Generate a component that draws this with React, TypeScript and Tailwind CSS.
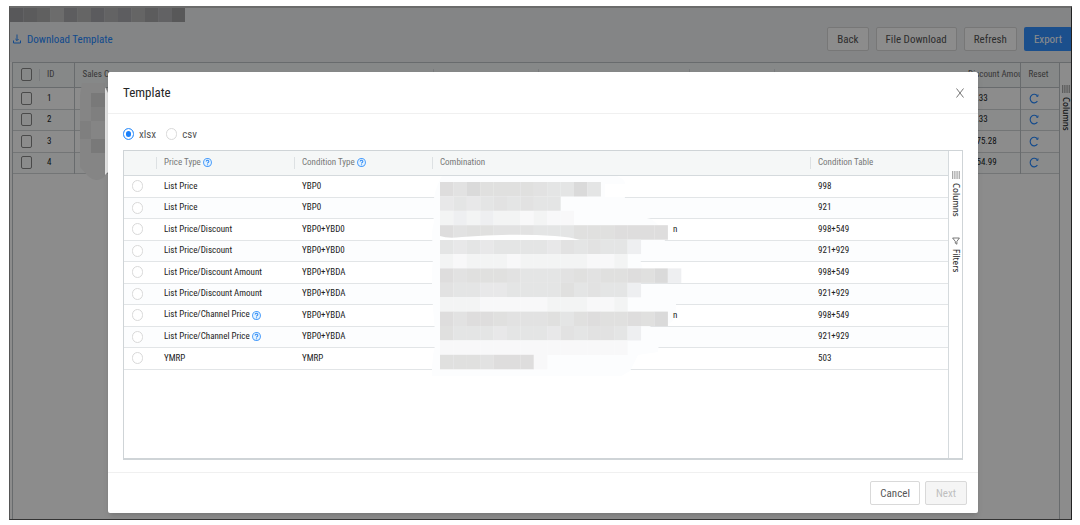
import { useState } from 'react';

const priceRows = [
    { id: 1, type: 'List Price', condition: 'YBP0', table: '998' },
    { id: 2, type: 'List Price', condition: 'YBP0', table: '921' },
    { id: 3, type: 'List Price/Discount', condition: 'YBP0+YBD0', rest: 'n', table: '998+549' },
    { id: 4, type: 'List Price/Discount', condition: 'YBP0+YBD0', table: '921+929' },
    { id: 5, type: 'List Price/Discount Amount', condition: 'YBP0+YBDA', table: '998+549' },
    { id: 6, type: 'List Price/Discount Amount', condition: 'YBP0+YBDA', table: '921+929' },
    { id: 7, type: 'List Price/Channel Price', help: true, condition: 'YBP0+YBDA', rest: 'n', table: '998+549' },
    { id: 8, type: 'List Price/Channel Price', help: true, condition: 'YBP0+YBDA', table: '921+929' },
    { id: 9, type: 'YMRP', condition: 'YMRP', table: '503' },
];

const orders = [
    { id: 1, amount: '0.33' },
    { id: 2, amount: '0.33' },
    { id: 3, amount: '275.28' },
    { id: 4, amount: '254.99' },
];

// one string per strip, one digit per block: 0 is the darkest grey, 9 nearly white
const strips = [
    '130222234404',
    '545434344',
    '7676778788',
    '13223334442221111',
    '454544445343446',
    '78777877777887',
    '132223444323221206',
    '344554444243446',
    '77788888777887',
    '13112333242122120',
    '244454445343346',
    '88888888888888',
    '22231118',
];
const greys = ['#dadada', '#dedddd', '#e0e0df', '#e2e2e2', '#e4e5e5', '#e8e8e9', '#eeeff1', '#f3f4f4', '#f8f8f9', '#fcfcfc'];

const HelpMark = () => (
    <svg viewBox="0 0 16 16" className="inline-block h-[9px] w-[9px] align-middle" aria-hidden="true">
        <circle cx="8" cy="8" r="7" fill="#e6f4ff" stroke="#4a9dfb" strokeWidth="1.8" />
        <path d="M5.6 6.4c0-3.2 4.8-3.2 4.8-.2 0 1.7-2.4 1.8-2.4 3.4" fill="none" stroke="#2f8af5" strokeWidth="1.8" />
        <circle cx="8" cy="12" r="1.1" fill="#2f8af5" />
    </svg>
);

const ColumnsMark = () => (
    <svg viewBox="0 0 8 8" className="h-2 w-2" aria-hidden="true">
        <path d="M0 0h8v8H0z" fill="#e6e6e6" />
        <path d="M.5 0v8M2.8 0v8M5.1 0v8M7.4 0v8" stroke="#999" strokeWidth=".8" />
    </svg>
);

const FilterMark = () => (
    <svg viewBox="0 0 8 8" className="h-2 w-2" aria-hidden="true">
        <path d="M.6 1h6.8L4.9 4.4v2.8L3.3 6.2V4.4z" fill="none" stroke="#555" strokeWidth=".8" />
    </svg>
);

const DownloadMark = () => (
    <svg viewBox="0 0 10 10" className="h-[10px] w-[10px]" fill="none" stroke="currentColor" aria-hidden="true">
        <path d="M1.5 6.5V9h7V6.5M5 .5v6M3.4 5l1.6 1.6L6.6 5" />
    </svg>
);

const ReloadMark = () => (
    <svg viewBox="0 0 10 11" className="h-[11px] w-[10px]" fill="none" stroke="currentColor" strokeWidth="1.1" aria-hidden="true">
        <path d="M8.4 8.1A4 4.3 0 1 1 8.4 3" />
        <path d="M9 1.4v2H7.4" strokeWidth=".9" />
    </svg>
);

const Mosaic = () => (
    <svg width="260" height="200" viewBox="0 0 260 200" className="absolute left-0 top-0 z-10 max-w-none" aria-hidden="true">
        <path d="M10 0h175q8 3 8 8h-20v13h20q-2 12-12 13l38 9q10 6 12 16l2 6-3 15-22 3 4 14-8 14 30 2 10 6v15q-1 12-8 14h-22l14 8-2 20-20 3-8 16-12 7-60 3-30 2 6 13H2q-5-30 2-55Q-3 100 2 78q-4-20 0-32Q-2 20 10 0" fill="#fcfdfe" />
        {strips.map((strip, row) =>
            strip.split('').map((shade, col) => (
                <rect key={`${row}-${col}`} x={8 + col * 13.4} y={6 + row * 14.4} width="13.5" height="14.5" fill={greys[Number(shade)]} />
            ))
        )}
        <path d="M8 60q8 3 22 1 50-4 93-1 16 1 25 4H8z" fill="#fff" />
    </svg>
);

const heading =
    'relative p-0 pl-2 text-left font-normal before:absolute before:left-0 before:top-1/4 before:h-1/2 before:w-px before:bg-[#dde1e3]';
const button = 'h-6 shrink-0 rounded-[2px] border border-[#d9d9d9] bg-white px-[9px] text-[11px] text-[#555]';
const checkbox = 'ml-2 block h-[13px] w-[11px] appearance-none rounded-[2px] border border-[#888]';
const radio =
    'h-3 w-[11px] shrink-0 appearance-none rounded-full border border-[#d9d9d9] bg-white checked:border-[#4a9dfb] checked:bg-[#1b80fa] checked:shadow-[inset_0_0_0_2px_#fff]';

const App = () => {
    const [format, setFormat] = useState('xlsx');
    const [selected, setSelected] = useState(0);

    return (
        <div className="flex min-h-screen bg-white pb-[5px] pl-[9px] pr-2 pt-[6px] font-['Roboto_Condensed',Roboto,sans-serif] leading-none">
            <div className="relative flex min-w-0 flex-1 flex-col overflow-hidden border border-t-2 border-b-[#333] border-l-[#555] border-r-[#222] border-t-[#6b6b6b]">
                <header className="bg-[#f0f2f5]">
                    <svg width="175" height="14" viewBox="0 0 175 14" className="block" aria-hidden="true">
                        {['#a0a0a5', '#a6a6a8', '#b0b0b0', '#c5c5c5', '#aaaaad', '#b8b8b8', '#a7a7ac', '#b4b4b6', '#aaaab0', '#b9b9b9', '#a8a8aa', '#b2b2b6', '#a0a0a2'].map((fill, i) => (
                            <rect key={i} x={i * 13.5} y="0" width="13.6" height="14" fill={fill} />
                        ))}
                    </svg>
                    <div className="-mr-px flex h-10 items-start justify-between pl-[2px] pt-[5px]">
                        <a href="#download" className="flex h-6 items-center gap-[5px] text-[11px] text-[#2488ff]">
                            <DownloadMark />
                            Download Template
                        </a>
                        <div className="flex gap-[7px]">
                            <button className={button}>Back</button>
                            <button className={button}>File Download</button>
                            <button className={button}>Refresh</button>
                            <button className="h-6 rounded-[2px] bg-[#3290ff] px-[10px] text-[11px] text-white">Export</button>
                        </div>
                    </div>
                </header>

                <main className="ml-[2px] flex flex-1 border-l border-t border-[#bdc3c7] bg-white">
                    <div className="min-w-0 flex-1">
                        <table className="w-full table-fixed border-collapse text-[9px] text-[#181d1f]">
                            <colgroup>
                                <col className="w-[26px]" />
                                <col className="w-[35px]" />
                                <col />
                                <col className="w-[105px]" />
                                <col className="w-[151px]" />
                                <col className="w-[85px]" />
                                <col className="w-[180px]" />
                                <col className="w-[66px]" />
                                <col className="w-[39px]" />
                            </colgroup>
                            <thead>
                                <tr className="h-6 border-b border-[#bdc3c7] bg-[#f5f7f7] text-[#666]">
                                    <th className="p-0">
                                        <input type="checkbox" aria-label="Select all" className={checkbox} />
                                    </th>
                                    <th className={`${heading} border-r border-[#bdc3c7]`}>ID</th>
                                    <th className="p-0 pl-2 text-left font-normal">Sales Org</th>
                                    <th className={heading}></th>
                                    <th className={heading}></th>
                                    <th className={heading}></th>
                                    <th className={heading}></th>
                                    <th className="overflow-hidden whitespace-nowrap border-r border-[#bdc3c7] p-0 pl-[14px] text-left font-normal">Discount Amount</th>
                                    <th className="p-0 pl-2 text-left font-normal">Reset</th>
                                </tr>
                            </thead>
                            <tbody>
                                {orders.map((order) => (
                                    <tr key={order.id} className="border-b border-[#d2d6d8] odd:h-[22px] even:h-[21px] even:bg-[#fcfdfe]">
                                        <td className="p-0">
                                            <input type="checkbox" aria-label={`Select row ${order.id}`} className={checkbox} />
                                        </td>
                                        <td className="border-r border-[#bdc3c7] p-0 pl-2">{order.id}</td>
                                        <td colSpan={5}></td>
                                        <td className="border-r border-[#bdc3c7] p-0 pl-[18px]">{order.amount}</td>
                                        <td className="p-0 pl-2">
                                            <button aria-label="Reset row" className="block text-[#2488ff]">
                                                <ReloadMark />
                                            </button>
                                        </td>
                                    </tr>
                                ))}
                            </tbody>
                        </table>
                    </div>
                    <aside className="w-3 border-l border-[#bdc3c7] pl-[2px]">
                        <button className="mt-[22px] flex flex-col items-center gap-1 font-['Noto_Sans'] text-[8px] font-medium text-[#181d1f]">
                            <ColumnsMark />
                            <span className="[writing-mode:vertical-rl]">Columns</span>
                        </button>
                    </aside>
                </main>

                <div className="absolute inset-0 flex bg-black/45 pb-[6px] pl-[98px] pr-[93px] pt-16">
                    {/* hidden values of the first column */}
                    <svg width="34" height="100" viewBox="0 0 34 100" className="absolute left-[68px] top-[75px]" aria-hidden="true">
                        <path d="M4 0h23v93q-8 8-17 0L2 84V12z" fill="#858585" />
                        <path d="M13 10h14v14H13zM13 56h14v14H13z" fill="#797979" />
                        <path d="M2 38h11v18H2zM13 24h14v14H13z" fill="#7f7f7f" />
                        <path d="M27 4l4 8v76l-4 4z" fill="#e4e4e4" />
                    </svg>
                    <div role="dialog" aria-label="Template" className="relative flex min-w-0 flex-1 flex-col rounded-[2px] bg-white shadow-md">
                        <div className="flex h-[42px] items-center justify-between border-b border-[#f0f0f0] pl-[15px] pr-[14px]">
                            <h2 className="text-[13px] leading-none text-[#262626]">Template</h2>
                            <button aria-label="Close" className="text-[#777]">
                                <svg viewBox="0 0 8 10" className="h-[10px] w-2" aria-hidden="true">
                                    <path d="M.5.5l7 9M7.5.5l-7 9" stroke="currentColor" strokeWidth="1" />
                                </svg>
                            </button>
                        </div>

                        <div className="flex flex-1 flex-col px-[15px] pb-3">
                            <div className="flex h-9 items-center gap-[10px] pt-1 text-[11px] text-[#555]">
                                {['xlsx', 'csv'].map((name) => (
                                    <label key={name} className="flex items-center gap-[5px]">
                                        <input type="radio" name="format" className={radio} checked={format === name} onChange={() => setFormat(name)} />
                                        {name}
                                    </label>
                                ))}
                            </div>

                            <div className="flex flex-1 border border-b-2 border-[#cfd4d7]">
                                <div className="min-w-0 flex-1">
                                    <table className="w-full table-fixed border-collapse text-[9px] text-[#222]">
                                        <colgroup>
                                            <col className="w-8" />
                                            <col className="w-[138px]" />
                                            <col className="w-[138px]" />
                                            <col />
                                            <col className="w-[138px]" />
                                        </colgroup>
                                        <thead>
                                            <tr className="h-6 border-b border-[#d5dadd] bg-[#f5f7f7] text-[#777]">
                                                <th className="p-0"></th>
                                                <th className={heading}>Price Type <HelpMark /></th>
                                                <th className={heading}>Condition Type <HelpMark /></th>
                                                <th className={heading}>Combination</th>
                                                <th className={heading}>Condition Table</th>
                                            </tr>
                                        </thead>
                                        <tbody>
                                            {priceRows.map((row) => (
                                                <tr key={row.id} className="border-b border-[#e2e5e7] odd:h-[22px] even:h-[21px] even:bg-[#fcfdfe]">
                                                    <td className="p-0">
                                                        <input
                                                            type="radio"
                                                            name="price"
                                                            aria-label={row.type}
                                                            className={`${radio} ml-2 block`}
                                                            checked={selected === row.id}
                                                            onChange={() => setSelected(row.id)}
                                                        />
                                                    </td>
                                                    <td className="p-0 pl-2">
                                                        {row.type} {row.help && <HelpMark />}
                                                    </td>
                                                    <td className="p-0 pl-2">{row.condition}</td>
                                                    <td className="relative p-0 pl-[241px]">
                                                        {row.id === 1 && <Mosaic />}
                                                        {row.rest && <span className="relative z-20">{row.rest}</span>}
                                                    </td>
                                                    <td className="p-0 pl-2">{row.table}</td>
                                                </tr>
                                            ))}
                                        </tbody>
                                    </table>
                                </div>
                                <aside className="flex w-[14px] flex-col items-center gap-5 border-l border-[#d5dadd] pt-5 font-['Noto_Sans'] text-[8px] font-medium text-[#333]">
                                    <button className="flex flex-col items-center gap-1">
                                        <ColumnsMark />
                                        <span className="[writing-mode:vertical-rl]">Columns</span>
                                    </button>
                                    <button className="flex flex-col items-center gap-1">
                                        <FilterMark />
                                        <span className="[writing-mode:vertical-rl]">Filters</span>
                                    </button>
                                </aside>
                            </div>
                        </div>

                        <div className="flex h-[41px] items-center justify-end gap-[5px] border-t border-[#f0f0f0] pr-[11px]">
                            <button className={button}>Cancel</button>
                            <button disabled className="h-6 rounded-[2px] border border-[#d9d9d9] bg-[#f5f5f5] px-[10px] text-[11px] text-[#bfbfbf]">Next</button>
                        </div>
                    </div>
                </div>
            </div>
        </div>
    );
};

export default App;
